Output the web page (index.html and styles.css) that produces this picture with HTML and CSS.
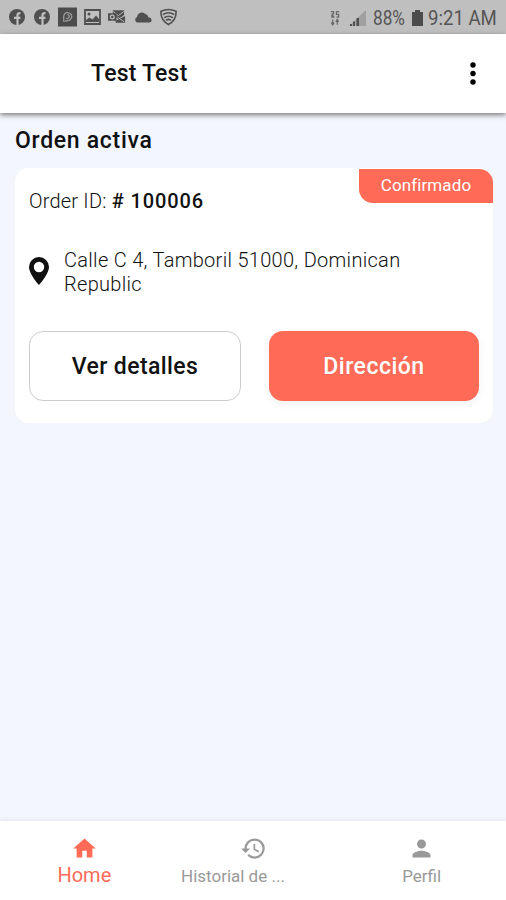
FILE: index.html
```html
<!DOCTYPE html>
<html lang="es">
<head>
  <meta charset="UTF-8">
  <meta name="viewport" content="width=device-width, initial-scale=1.0">
  <title>Orden activa</title>
  <link rel="stylesheet" href="styles.css">
</head>
<body>
  <div class="status-bar">
    <div class="status-icons">
      <svg class="icon-round" viewBox="0 0 16 16"><circle cx="8" cy="8" r="8" fill="#505050"/><path d="M8.500 16V6Q8.500 4 11.500 4.200M5 8.800H11.500" fill="none" stroke="#c0c0c0" stroke-width="2.200"/></svg>
      <svg class="icon-round" viewBox="0 0 16 16"><circle cx="8" cy="8" r="8" fill="#505050"/><path d="M8.500 16V6Q8.500 4 11.500 4.200M5 8.800H11.500" fill="none" stroke="#c0c0c0" stroke-width="2.200"/></svg>
      <svg class="icon-app" viewBox="0 0 20 20"><path d="M0 0H20V20H0Z" fill="#4c4c4c"/><path d="M6 15V9.500A4.200 4.200 0 1 1 10 13.700L7 14.500M10 7.500A2 2 0 1 1 8.500 11" fill="none" stroke="#999" stroke-width="1.400"/></svg>
      <svg class="icon-photo" viewBox="0 0 17 16"><path d="M1 1H16V15H1Z" fill="none" stroke="#505050" stroke-width="1.800"/><path d="M2 13V11L5.500 8.500L8.500 10.500L12 6.500L15 10V13Z" fill="#505050"/><circle cx="5" cy="5" r="1.500" fill="#505050"/></svg>
      <svg class="icon-mail" viewBox="0 0 19 16"><path d="M5 1H17V6L11 10L5 6Z" fill="#505050"/><path d="M5 2L11 6.500L17 2" fill="none" stroke="#bbb"/><path d="M0 4H9V12H0Z" fill="#505050"/><circle cx="4.500" cy="8" r="2" fill="none" stroke="#bbb" stroke-width="1.300"/><path d="M10 11L18 7V14H8V12Z" fill="#505050"/><path d="M10 8L17 13" stroke="#bbb"/></svg>
      <svg class="icon-cloud" viewBox="0 0 18 12"><path d="M3 11.500A3 3 0 0 1 3 6A5 5 0 0 1 11.500 3A4.500 4.500 0 0 1 14.500 6.500A2.500 2.500 0 0 1 15.500 11.500Z" fill="#505050"/></svg>
      <svg class="icon-shield" viewBox="0 0 18 18"><path d="M1 3Q9-.8 17 3Q17.500 12.500 9 17Q.5 12.500 1 3Z" fill="none" stroke="#505050" stroke-width="1.700"/><path d="M3 6.500Q9 2.500 15 6.500M4.500 9.800Q9 6.500 13.500 9.800M6.500 12.500Q9 10.500 11.500 12.500" fill="none" stroke="#505050" stroke-width="1.700"/></svg>
    </div>
    <div class="status-info">
      <svg class="icon-net" viewBox="0 0 11 17"><path d="M1 1H4V3L2 5V7H5M7 1H10M7 1V4H9.500V7H7M2 3L4 7" fill="none" stroke="#666" stroke-width="1.300"/><path d="M3 9.500V15M1.500 13L3 15.500L4.500 13M8 15.500V10M6.500 12L8 9.500L9.500 12" fill="none" stroke="#666" stroke-width="1.300"/></svg>
      <svg class="icon-signal" viewBox="0 0 17 16"><path d="M17 0V16H0Z" fill="#a0a0a0"/><path d="M1 14H3V16H1ZM4 11.500H6V16H4ZM7.500 8H10V16H7.500Z" fill="#505050"/></svg>
      <span class="percent">88%</span>
      <svg class="icon-battery" viewBox="0 0 11 16"><path d="M3 0H8V2H11V16H0V2H3Z" fill="#4c4c4c"/></svg>
      <span class="time">9:21 AM</span>
    </div>
  </div>

  <header class="app-bar">
    <h1>Test Test</h1>
    <svg class="menu" viewBox="0 0 6 23"><circle cx="3" cy="3" r="2.700"/><circle cx="3" cy="11.500" r="2.700"/><circle cx="3" cy="20" r="2.700"/></svg>
  </header>

  <main>
    <h2>Orden activa</h2>
    <section class="card">
      <div class="card-top">
        <p class="order">Order ID: <b>#&nbsp;100006</b></p>
        <span class="badge">Confirmado</span>
      </div>
      <div class="address">
        <svg class="pin" viewBox="0 0 20 28"><path fill-rule="evenodd" d="M10 0A10 10 0 0 0 0 10C0 17 10 28 10 28S20 17 20 10A10 10 0 0 0 10 0ZM10 4.800A5.200 5.200 0 1 1 10 15.200A5.200 5.200 0 0 1 10 4.800Z" fill="#101010"/></svg>
        <p>Calle C 4, Tamboril 51000, Dominican<br>Republic</p>
      </div>
      <div class="actions">
        <button class="button outline">Ver detalles</button>
        <button class="button primary">Dirección</button>
      </div>
    </section>
  </main>

  <nav class="bottom-nav">
    <a class="nav-item active">
      <svg class="nav-icon" viewBox="0 0 24 24"><path d="M10 20v-6h4v6h5v-8h3L12 3 2 12h3v8z"/></svg>
      <span>Home</span>
    </a>
    <a class="nav-item history">
      <svg class="nav-icon" viewBox="0 0 24 24"><path d="M13 3a9 9 0 0 0-9 9H1l3.890 3.890.070.140L9 12H6c0-3.870 3.130-7 7-7s7 3.130 7 7-3.130 7-7 7c-1.930 0-3.680-.790-4.940-2.060l-1.420 1.420A8.954 8.954 0 0 0 13 21a9 9 0 0 0 0-18zm-1 5v5l4.280 2.540.720-1.210-3.500-2.080V8H12z"/></svg>
      <span>Historial de ...</span>
    </a>
    <a class="nav-item profile">
      <svg class="nav-icon" viewBox="0 0 24 24"><path d="M12 12c2.210 0 4-1.790 4-4s-1.790-4-4-4-4 1.790-4 4 1.790 4 4 4zm0 2c-2.670 0-8 1.340-8 4v2h16v-2c0-2.660-5.330-4-8-4z"/></svg>
      <span>Perfil</span>
    </a>
  </nav>
</body>
</html>
```
FILE: styles.css
```css
* {
  box-sizing: border-box;
}

body {
  margin: 0;
  height: 100vh;
  display: flex;
  flex-direction: column;
  overflow: hidden;
  font-family: 'Roboto', 'Liberation Sans', sans-serif;
  background-color: #f3f6fd;
  color: #111;
}

h1, h2, p {
  margin: 0;
}

svg {
  display: block;
  flex-shrink: 0;
}

.status-bar {
  height: 34px;
  padding: 0 9px;
  display: flex;
  justify-content: space-between;
  align-items: center;
  background-color: #bfbfbf;
  color: #555;
}

.status-icons, .status-info {
  display: flex;
  align-items: center;
}

.status-icons {
  gap: 8px;
}

.icon-round {
  width: 16px;
  height: 16px;
  margin-right: 1px;
}

.icon-app {
  width: 19px;
  height: 20px;
  margin-left: -1px;
  margin-right: -1px;
}

.icon-photo {
  width: 17px;
  height: 16px;
}

.icon-mail {
  width: 18px;
  height: 16px;
  margin-left: -1px;
}

.icon-cloud {
  width: 18px;
  height: 12px;
}

.icon-shield {
  width: 17px;
  height: 18px;
}

.status-info {
  font-size: 20px;
  line-height: 34px;
  padding-top: 2px;
}

.icon-net {
  width: 10px;
  height: 17px;
  margin-right: 9px;
}

.icon-signal {
  width: 17px;
  height: 16px;
  margin-right: 7px;
}

.percent {
  width: 39px;
  transform: scaleX(0.86);
  transform-origin: left;
}

.icon-battery {
  width: 11px;
  height: 16px;
  margin-right: 5px;
}

.time {
  width: 69px;
  white-space: nowrap;
  transform: scaleX(0.93);
  transform-origin: left;
}

.app-bar {
  height: 79px;
  padding: 0 30px 0 91px;
  display: flex;
  justify-content: space-between;
  align-items: center;
  background-color: #fff;
  box-shadow: 0 2px 5px rgba(0, 0, 0, 0.5);
}

h1, h2 {
  font-size: 23px;
  font-weight: 500;
  line-height: 28px;
}

h1 {
  letter-spacing: 0.2px;
}

h2 {
  letter-spacing: 0.7px;
}

.menu {
  width: 6px;
  height: 23px;
}

main {
  flex: 1;
  padding: 14px 13px 0 15px;
}

.card {
  height: 255px;
  margin-top: 13px;
  padding: 0 14px;
  background-color: #fff;
  border-radius: 14px;
}

.card-top {
  display: flex;
  justify-content: space-between;
  margin-right: -14px;
}

.order {
  padding-top: 20px;
  font-size: 20px;
  font-weight: 300;
  line-height: 26px;
  letter-spacing: 0.2px;
}

.order b {
  font-weight: 500;
  letter-spacing: 0.9px;
}

.badge {
  width: 134px;
  height: 34px;
  margin-top: 1px;
  border-radius: 0 14px 0 14px;
  background-color: #ff6b57;
  color: #fff;
  font-size: 17px;
  line-height: 33px;
  letter-spacing: 0.1px;
  text-align: center;
}

.address {
  display: flex;
  align-items: center;
  gap: 15px;
  margin-top: 33px;
  font-size: 20px;
  font-weight: 300;
  line-height: 24px;
  letter-spacing: 0.3px;
}

.address p {
  padding-top: 1px;
  margin-bottom: -1px;
}

.pin {
  width: 20px;
  height: 28px;
}

.actions {
  display: flex;
  gap: 28px;
  margin-top: 36px;
}

.button {
  flex: 1;
  height: 70px;
  padding: 0;
  border: none;
  border-radius: 14px;
  font-family: inherit;
  font-size: 23px;
  font-weight: 500;
}

.outline {
  background-color: #fff;
  border: 1px solid #ccc;
  color: #111;
  letter-spacing: 0.4px;
}

.primary {
  background-color: #ff6b57;
  color: #fff;
  box-shadow: 0 3px 8px rgba(0, 0, 0, 0.06);
  letter-spacing: 0.5px;
}

.bottom-nav {
  height: 79px;
  padding-top: 14px;
  display: flex;
  background-color: #fff;
  box-shadow: 0 -2px 3px rgba(0, 0, 0, 0.05);
}

.nav-item {
  flex: 1;
  display: flex;
  flex-direction: column;
  align-items: center;
  color: #999;
  fill: #999;
  font-size: 17px;
  line-height: 28px;
}

.nav-icon {
  width: 27px;
  height: 27px;
}

.history span {
  width: 144px;
}

.active {
  color: #ff6b57;
  fill: #ff6b57;
  font-size: 20px;
  line-height: 26px;
}
```
